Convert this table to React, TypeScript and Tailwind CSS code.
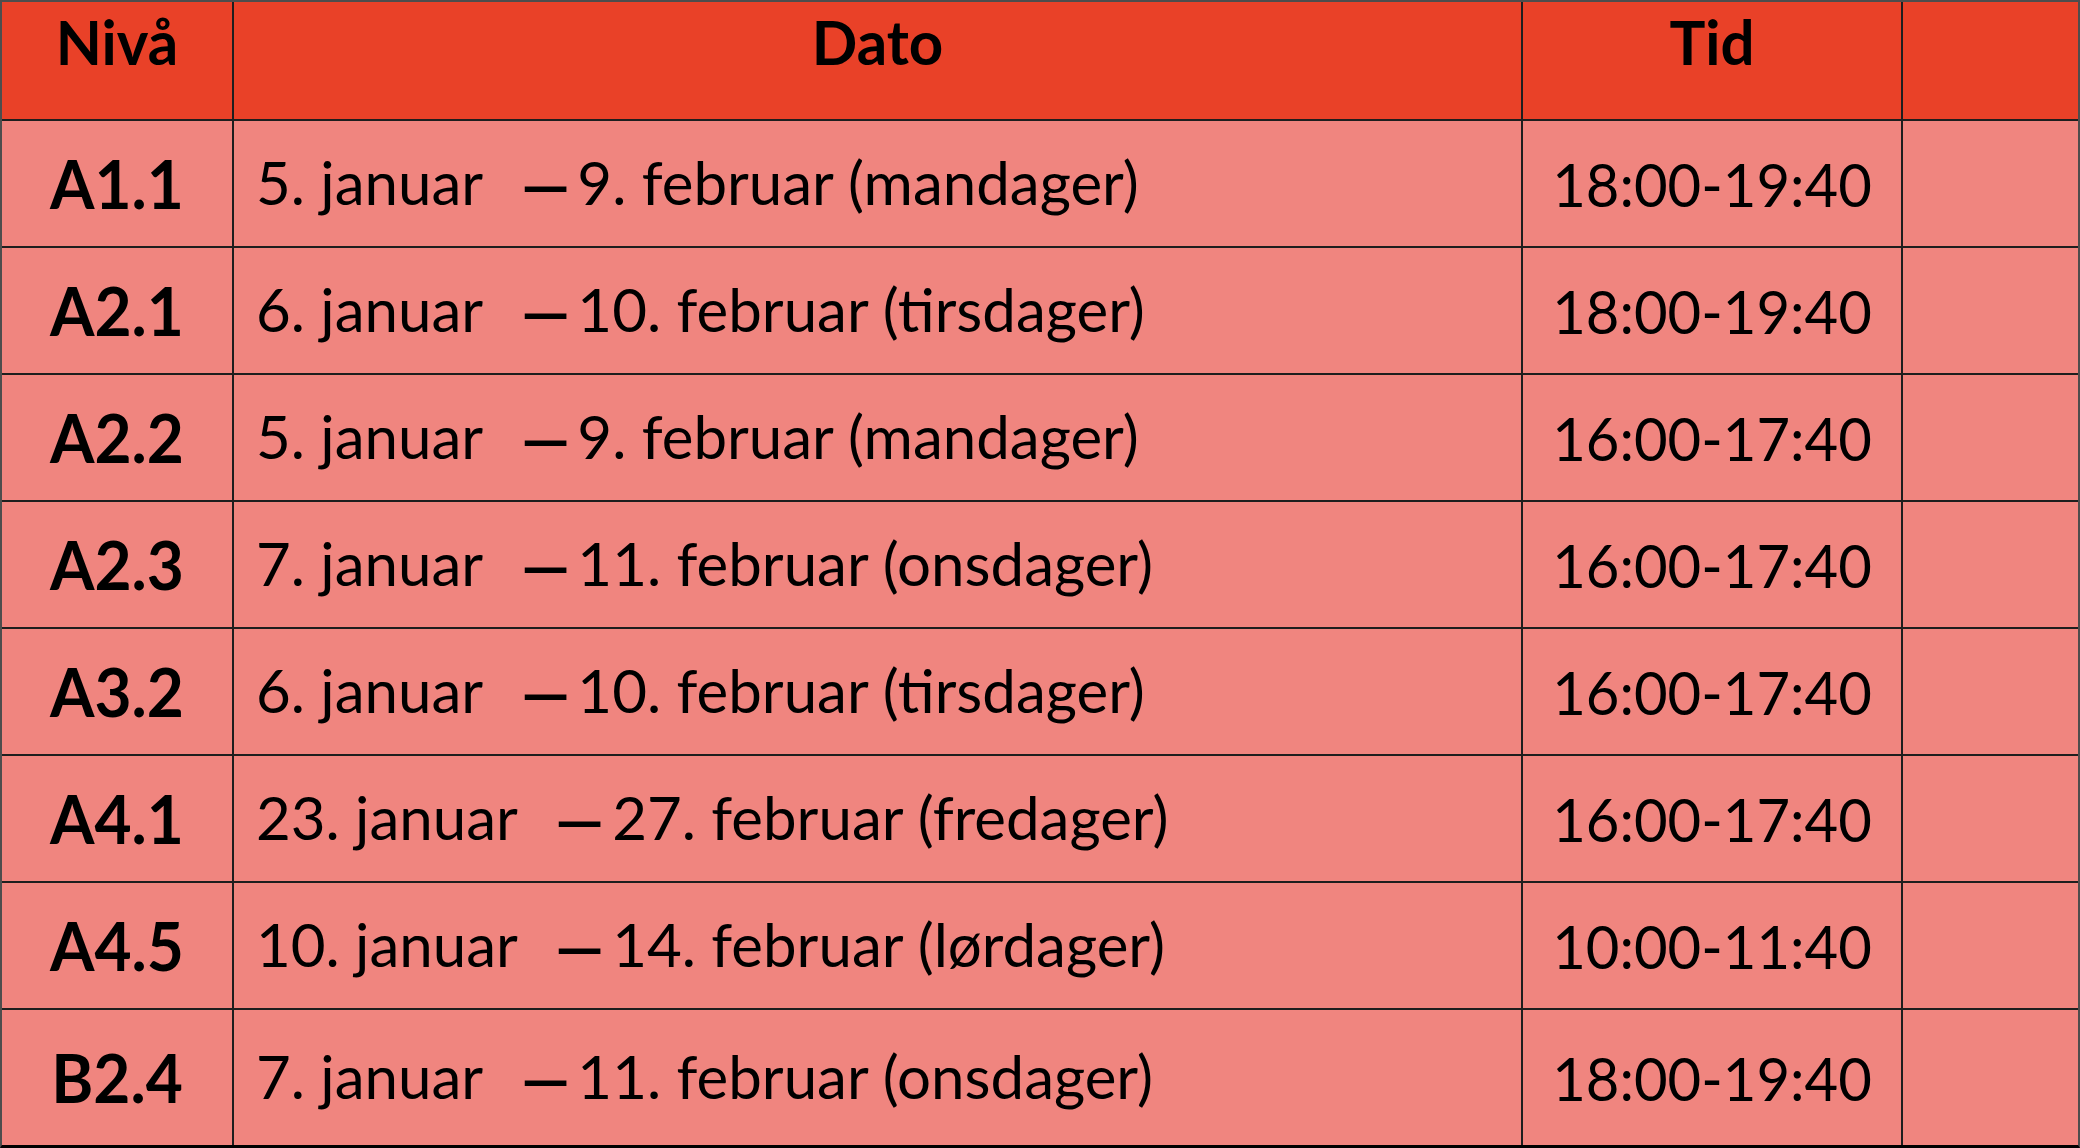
const rows = [
  { level: "A1.1", from: "5. januar", to: "9. februar (mandager)", time: "18:00-19:40" },
  { level: "A2.1", from: "6. januar", to: "10. februar (tirsdager)", time: "18:00-19:40" },
  { level: "A2.2", from: "5. januar", to: "9. februar (mandager)", time: "16:00-17:40" },
  { level: "A2.3", from: "7. januar", to: "11. februar (onsdager)", time: "16:00-17:40" },
  { level: "A3.2", from: "6. januar", to: "10. februar (tirsdager)", time: "16:00-17:40" },
  { level: "A4.1", from: "23. januar", to: "27. februar (fredager)", time: "16:00-17:40" },
  { level: "A4.5", from: "10. januar", to: "14. februar (lørdager)", time: "10:00-11:40" },
  { level: "B2.4", from: "7. januar", to: "11. februar (onsdager)", time: "18:00-19:40" },
];

const font = { fontFamily: "Lato, 'Noto Sans', sans-serif" };

export default function App() {
  return (
    <div
      className="w-[2080px] h-[1148px] bg-[#1e1e1e] border-t-2 border-l-2 border-r-2 border-b-[3px] border-t-[#4d4d4d] border-l-[#4d4d4d] border-r-[#4d4d4d] border-b-black grid grid-cols-[230px_1287px_378px_175px] grid-rows-[117px_repeat(7,125px)_135px] gap-[2px] text-black"
      style={font}
    >
      {/* header */}
      <div className="bg-[#E94128] flex justify-center pt-[10px] text-[60px] font-bold leading-none">
        <span className="scale-y-[1.03]">Nivå</span>
      </div>
      <div className="bg-[#E94128] flex justify-center pt-[10px] text-[60px] font-bold leading-none">
        <span className="scale-y-[1.03]">Dato</span>
      </div>
      <div className="bg-[#E94128] flex justify-center pt-[10px] text-[60px] font-bold leading-none">
        <span className="scale-y-[1.03]">Tid</span>
      </div>
      <div className="bg-[#E94128]" />

      {rows.map((r) => (
        <div key={r.level} className="contents">
          <div className="bg-[#F0857F] flex items-center justify-center text-[64px] font-bold leading-none">
            <span className="scale-y-[1.05]">{r.level}</span>
          </div>
          <div className="bg-[#F0857F] flex items-center pl-[22px] text-[60px] leading-none whitespace-pre">
            <span>
              {r.from}
              {"  "}
              <span className="inline-block ml-[16px] scale-x-[1.25] scale-y-[1.4] -translate-y-[3px] font-['Liberation_Sans']">–</span>
              {" "}
              {r.to}
            </span>
          </div>
          <div className="bg-[#F0857F] flex items-center justify-center text-[58px] leading-none">
            <span className="scale-y-[1.05]">{r.time}</span>
          </div>
          <div className="bg-[#F0857F]" />
        </div>
      ))}
    </div>
  );
}
